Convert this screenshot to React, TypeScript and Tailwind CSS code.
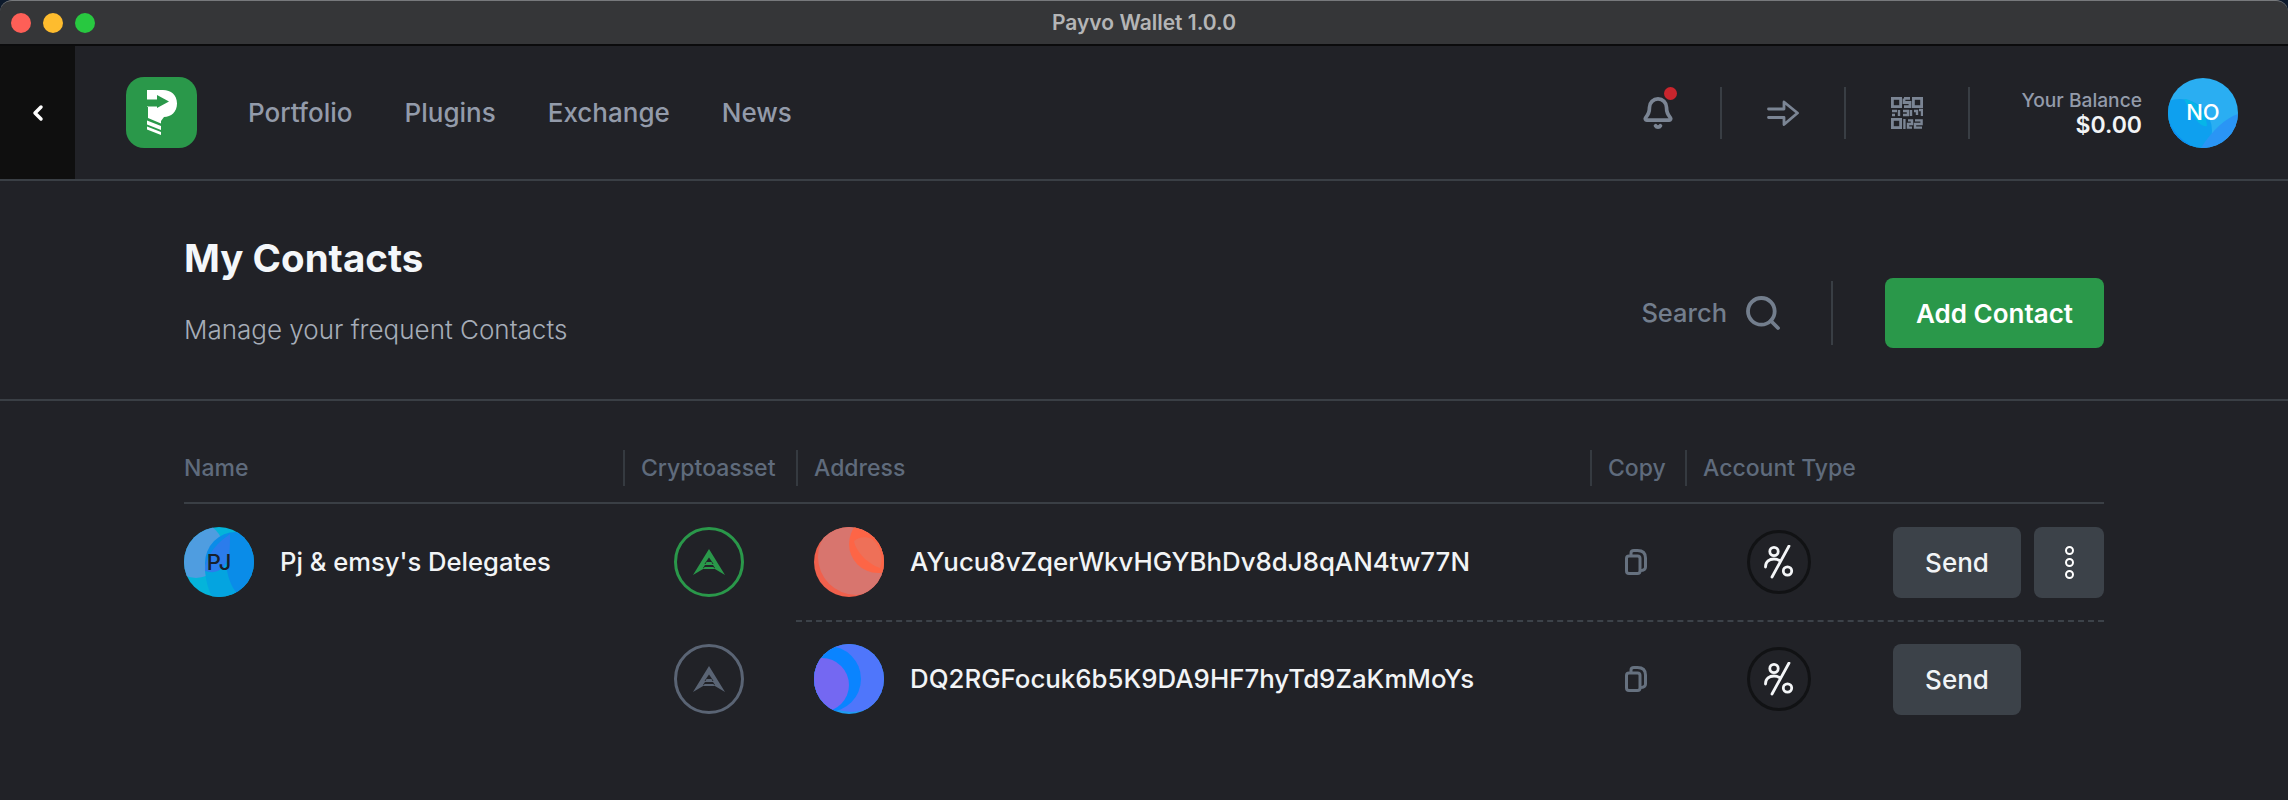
import React from "react";
import { Bell, Search, ChevronLeft } from "lucide-react";

function Logo() {
  return (
    <div className="flex h-[71px] w-[71px] items-center justify-center rounded-[18px] bg-[#2a984a]">
      <svg width="30" height="45" viewBox="0 0 30 45">
        <path d="M0 0H16C24 0 30 5 30 13.500C30 22 24 27 17 27L14 31V33.500L1 28V17H0Z" fill="#ffffff" />
        <path d="M0 9.500H10V5L22 11.500L10 18V16.500H0Z" fill="#2a984a" />
        <path d="M0 30.500L14 36V40L0 34.500Z" fill="#ffffff" />
        <path d="M0 36.500L14 42V45L0 39.500Z" fill="#ffffff" />
      </svg>
    </div>
  );
}

function QrIcon() {
  return (
    <svg width="32" height="32" viewBox="0 0 32 32" fill="none" stroke="#7b8594" strokeWidth="2.800">
      <rect x="1.400" y="1.400" width="8.200" height="8.200" />
      <rect x="22.400" y="1.400" width="8.200" height="8.200" />
      <rect x="1.400" y="22.400" width="8.200" height="8.200" />
      <path d="M13 1.400H19M13 1.400V5.500H19V9.600H13" />
      <path d="M1 14H6M1 18H4M8 13V19M12 14H17V18H12M20 13V19M23 14H26V18M28 13H31V19" strokeWidth="2.400" />
      <path d="M13.400 22V32M17 23.400H21V27H17V30.600H21M24 23.400H30.600V27H24V30.600H31" strokeWidth="2.400" />
    </svg>
  );
}

function ArrowIcon() {
  return (
    <svg width="32" height="26" viewBox="0 0 32 26" fill="none" stroke="#7b8594" strokeWidth="2.800" strokeLinecap="round" strokeLinejoin="round">
      <path d="M1.500 9H17V2L30.500 13L17 24.500V17.500H1.500" />
    </svg>
  );
}

function CopyIcon() {
  return (
    <svg width="22" height="26" viewBox="0 0 22 26" fill="none" stroke="#66717f" strokeWidth="3" strokeLinejoin="round">
      <rect x="1.500" y="7" width="13.500" height="17.500" rx="2.500" />
      <path d="M6 6.500V4C6 2.300 7.300 1.500 9 1.500H12.500C17.500 1.500 20.500 4 20.500 9V18C20.500 20.500 19 21.500 15 21.500" />
    </svg>
  );
}

function PercentBadge() {
  return (
    <div className="flex h-16 w-16 items-center justify-center rounded-full border-[3px] border-[#111214]">
      <svg width="30" height="34" viewBox="0 0 30 34" fill="none" stroke="#f4f6f8" strokeWidth="2.800" strokeLinecap="round">
        <path d="M25 1L8 32" />
        <circle cx="10" cy="6.500" r="4.200" />
        <circle cx="23.500" cy="26" r="4.200" />
        <path d="M1.500 22C1.500 16.500 5.500 14 10 14C12 14 14 14.500 15.500 15.500" />
      </svg>
    </div>
  );
}

function ArkCircle({ color }: { color: string }) {
  return (
    <div className="flex h-[70px] w-[70px] items-center justify-center rounded-full border-[3px]" style={{ borderColor: color }}>
      <svg width="32" height="26" viewBox="0 0 32 26" fill={color}>
        <path d="M16 0L32 26L16 16.500L0 26Z" />
        <path d="M16 8.500L20.500 15H11.500Z" fill="#212227" />
        <path d="M12 16H20L22 19H10Z" fill="#212227" />
        <path d="M13.500 13H18.500L19.500 15H12.500Z" />
        <path d="M11.500 18H20.500L21.500 20H10.500Z" />
      </svg>
    </div>
  );
}

function WalletAvatar() {
  return (
    <div className="relative h-[70px] w-[70px] overflow-hidden rounded-full">
      <svg className="absolute inset-0" width="70" height="70" viewBox="0 0 70 70">
        <rect width="70" height="70" fill="#2aaef2" />
        <circle cx="12" cy="53" r="32" fill="#0ea0ef" />
        <path d="M16 21C28 22 38 34 39 48C33 50 25 40 16 21Z" fill="#06b5e8" />
        <path d="M70 36C58 40 44 52 33 70H70Z" fill="#2a95f5" />
        <path d="M0 40C4 54 16 66 30 70H8Z" fill="#0b8cf0" />
      </svg>
      <span className="absolute inset-0 flex items-center justify-center text-[22px] font-medium text-white">NO</span>
    </div>
  );
}

function ContactAvatar() {
  return (
    <div className="relative h-[70px] w-[70px] overflow-hidden rounded-full">
      <svg className="absolute inset-0" width="70" height="70" viewBox="0 0 70 70">
        <rect width="70" height="70" fill="#04b4da" />
        <circle cx="12" cy="23" r="28" fill="#4f9de0" />
        <circle cx="52" cy="36" r="31" fill="#0a8ce8" />
        <path d="M46 7C36 14 21 27 21 44C30 52 43 40 45 27C46 20 46 13 46 7Z" fill="#2b7cec" />
        <path d="M21 44C30 47 38 44 42 36C43 48 47 60 53 66C44 72 35 72 28 70C24 62 22 54 21 44Z" fill="#04a4e0" />
      </svg>
      <span className="absolute inset-0 flex items-center justify-center text-[22px] font-medium text-[#17202c]">PJ</span>
    </div>
  );
}

function RedAvatar() {
  return (
    <svg className="rounded-full" width="70" height="70" viewBox="0 0 70 70">
      <rect width="70" height="70" fill="#f0604c" />
      <circle cx="42" cy="30" r="38" fill="#d8756e" />
      <circle cx="64" cy="17" r="29" fill="#fd6546" />
      <path d="M40 14C42 26 56 38 66 41C70 30 66 18 58 12C52 9 44 10 40 14Z" fill="#ee7058" />
    </svg>
  );
}

function BlueAddressAvatar() {
  return (
    <svg className="rounded-full" width="70" height="70" viewBox="0 0 70 70">
      <rect width="70" height="70" fill="#1f9cf2" />
      <circle cx="38" cy="24" r="44" fill="#4f76fb" />
      <circle cx="14" cy="35" r="33" fill="#0a84ff" />
      <circle cx="8" cy="41" r="27" fill="#7468f2" />
    </svg>
  );
}

function HeaderCell({ children, first }: { children: string; first?: boolean }) {
  return (
    <div className={`flex h-9 items-center text-[23px] font-medium text-[#5f6b7c] ${first ? "" : "border-l-2 border-[#353a40] pl-[16px]"}`}>
      {children}
    </div>
  );
}

function RowCells({ address, assetColor, avatar, dashed, more }: { address: string; assetColor: string; avatar: React.ReactNode; dashed?: boolean; more?: boolean }) {
  return (
    <>
      <div className={`flex items-center pl-[51px] ${dashed ? "h-[118px] pb-[2px]" : "h-[114px]"}`}>
        <ArkCircle color={assetColor} />
      </div>
      <div className={`col-span-3 grid grid-cols-[794px_95px_1fr] ${dashed ? "h-[118px] border-b-2 border-dashed border-[#3c4249]" : "h-[114px]"}`}>
        <div className="flex items-center gap-[26px] pl-[18px]">
          {avatar}
          <span className="text-[25.85px] font-medium text-[#f2f4f6]">{address}</span>
        </div>
        <div className="flex items-center pl-[35px]">
          <CopyIcon />
        </div>
        <div className="flex items-center">
          <div className="ml-[62px] mr-[82px]">
            <PercentBadge />
          </div>
          <button className="flex h-[71px] w-[128px] items-center justify-center rounded-lg bg-[#3c4249] text-[26px] font-medium text-[#f2f4f6]">Send</button>
          {more && (
            <button className="ml-[13px] flex h-[71px] w-[70px] flex-col items-center justify-center gap-[3px] rounded-lg bg-[#3c4249]">
              <span className="h-[9px] w-[9px] rounded-full border-2 border-white" />
              <span className="h-[9px] w-[9px] rounded-full border-2 border-white" />
              <span className="h-[9px] w-[9px] rounded-full border-2 border-white" />
            </button>
          )}
        </div>
      </div>
    </>
  );
}

export default function App() {
  return (
    <div className="h-[800px] w-[2288px] overflow-hidden bg-[#0d1a2c] font-['Inter',sans-serif]">
      <div className="relative flex h-[46px] items-center justify-center rounded-t-[12px] border-b-2 border-t border-b-[#0b0b0c] border-t-[#77797c] bg-[#353638]">
        <div className="absolute left-[11px] top-[12px] flex gap-[12px]">
          <span className="h-5 w-5 rounded-full bg-[#fe5f57]" />
          <span className="h-5 w-5 rounded-full bg-[#febc2e]" />
          <span className="h-5 w-5 rounded-full bg-[#28c840]" />
        </div>
        <span className="text-[21px] font-semibold text-[#b4b5b6]">Payvo Wallet 1.0.0</span>
      </div>

      <div className="h-[754px] bg-[#212227]">
        <nav className="flex h-[135px] items-stretch border-b-2 border-[#3a3f45]">
          <div className="flex w-[75px] items-center justify-center bg-[#0f0f0f]">
            <ChevronLeft size={24} strokeWidth={3.500} color="#ffffff" />
          </div>
          <div className="ml-[51px] flex items-center">
            <Logo />
          </div>
          <div className="ml-[51px] flex items-center gap-[52px] text-[26px] font-medium text-[#939baa]">
            <span>Portfolio</span>
            <span>Plugins</span>
            <span>Exchange</span>
            <span>News</span>
          </div>
          <div className="ml-auto flex items-center pr-[50px]">
            <div className="relative flex w-[79px] justify-start">
              <Bell size={34} color="#7b8594" strokeWidth={2.600} />
              <span className="absolute left-[23px] top-[-9px] h-[13px] w-[13px] rounded-full bg-[#c9252d]" />
            </div>
            <div className="h-[52px] border-l-2 border-[#393e44]" />
            <div className="flex w-[122px] justify-center">
              <ArrowIcon />
            </div>
            <div className="h-[52px] border-l-2 border-[#393e44]" />
            <div className="flex w-[122px] justify-center">
              <QrIcon />
            </div>
            <div className="h-[52px] border-l-2 border-[#393e44]" />
            <div className="ml-[52px] flex flex-col items-end">
              <span className="text-[19.2px] leading-[24px] font-medium text-[#939baa]">Your Balance</span>
              <span className="text-[23px] leading-[26px] font-semibold text-[#f2f4f6]">$0.00</span>
            </div>
            <div className="ml-[26px]">
              <WalletAvatar />
            </div>
          </div>
        </nav>

        <header className="flex h-[220px] items-center border-b-2 border-[#3a3f45] px-[184px]">
          <div className="flex flex-col">
            <h1 className="text-[38.5px] leading-[48px] font-bold text-[#f4f7fa]">My Contacts</h1>
            <p className="mt-[32px] text-[26px] leading-[32px] font-light text-[#a6adb8]">Manage your frequent Contacts</p>
          </div>
          <div className="ml-auto mt-[46px] flex items-center">
            <span className="text-[25.5px] font-medium text-[#737e8d]">Search</span>
            <Search className="ml-[16px]" size={40} color="#737e8d" strokeWidth={2.300} />
            <div className="ml-[48px] h-[64px] border-l-2 border-[#393e44]" />
            <button className="ml-[52px] flex h-[70px] w-[219px] items-center justify-center rounded-lg bg-[#2a984a] text-[26px] font-semibold text-white">Add Contact</button>
          </div>
        </header>

        <section className="mx-[184px] mt-[49px]">
          <div className="grid grid-cols-[439px_173px_794px_95px_1fr] items-center border-b-2 border-[#3a3f45] pb-[16px]">
            <HeaderCell first>Name</HeaderCell>
            <HeaderCell>Cryptoasset</HeaderCell>
            <HeaderCell>Address</HeaderCell>
            <HeaderCell>Copy</HeaderCell>
            <HeaderCell>Account Type</HeaderCell>
          </div>
          <div className="grid grid-cols-[439px_173px_794px_95px_1fr]">
            <div className="row-span-2 flex h-[116px] items-center gap-[26px]">
              <ContactAvatar />
              <span className="text-[25.6px] font-medium text-[#f2f4f6]">Pj &amp; emsy's Delegates</span>
            </div>
            <RowCells address="AYucu8vZqerWkvHGYBhDv8dJ8qAN4tw77N" assetColor="#2a984a" avatar={<RedAvatar />} dashed more />
            <RowCells address="DQ2RGFocuk6b5K9DA9HF7hyTd9ZaKmMoYs" assetColor="#5a6474" avatar={<BlueAddressAvatar />} />
          </div>
        </section>
      </div>
    </div>
  );
}
